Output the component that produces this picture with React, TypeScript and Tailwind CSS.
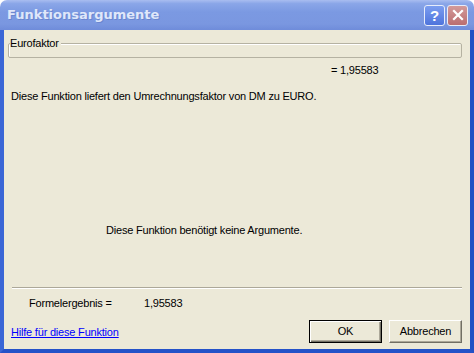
import React from "react";

const font = { fontFamily: '"Liberation Sans", Arial, sans-serif', letterSpacing: "-0.2px" };

function Btn({ children, def }: { children: React.ReactNode; def?: boolean }) {
  return (
    <div
      className={
        "w-[73px] h-[23px] flex items-center justify-center text-[11px] text-black bg-[#ece9d8] " +
        (def
          ? "border border-black shadow-[inset_1px_1px_0_#ffffff,inset_-1px_-1px_0_#716f64,inset_-2px_-2px_0_#aca899]"
          : "border-t border-l border-t-white border-l-white border-r border-b border-r-[#716f64] border-b-[#716f64] shadow-[inset_-1px_-1px_0_#aca899]")
      }
    >
      {children}
    </div>
  );
}

export default function App() {
  return (
    <div className="w-[474px] h-[353px] flex flex-col bg-white" style={font}>
      {/* title bar */}
      <div className="h-[30px] shrink-0 rounded-t-[7px] flex items-center pl-[7px] pr-[6px] bg-[linear-gradient(180deg,#a9bdf0_0%,#8aa6e8_12%,#7b99e2_40%,#7a97e0_80%,#6f8cda_100%)]">
        <span
          className="text-[13px] font-bold text-[#dfe7fa] tracking-[0px]"
          style={{ fontFamily: '"DejaVu Sans", "Liberation Sans", sans-serif', textShadow: "1px 1px 0 #6a86cf" }}
        >
          Funktionsargumente
        </span>
        <div className="ml-auto flex gap-[2px] items-center">
          <div className="w-[21px] h-[21px] rounded-[3px] border border-[#e6ecfb] bg-[linear-gradient(180deg,#7b9df0,#4e74dc)] flex items-center justify-center text-white text-[15px] font-bold leading-none">
            ?
          </div>
          <div className="w-[21px] h-[21px] rounded-[3px] border border-[#e6ecfb] bg-[linear-gradient(180deg,#d39a9a,#bb6e70)] flex items-center justify-center">
            <svg width="12" height="12" viewBox="0 0 12 12">
              <path d="M2 2L10 10M10 2L2 10" stroke="#fff" strokeWidth="2.2" strokeLinecap="square" />
            </svg>
          </div>
        </div>
      </div>
      {/* body with frame */}
      <div className="flex-1 flex flex-col bg-[#ece9d8] border-l-[4px] border-l-[#3a66d6] border-r-[4px] border-r-[#2150c4] border-b-[4px] border-b-[#2452c8] text-[11px] text-black">
        {/* group box */}
        <div className="mt-[13px] ml-[4px] mr-[8px] h-[15px] relative border border-[#b5b2a2] rounded-[2px] shadow-[inset_1px_1px_0_#ffffff]">
          <span className="absolute left-[1px] top-[-8px] bg-[#ece9d8] pr-[2px] leading-[14px]">Eurofaktor</span>
        </div>
        <div className="mt-[6px] pl-[327px] leading-[13px]">= 1,95583</div>
        <div className="mt-[13px] pl-[7px] leading-[13px]">Diese Funktion liefert den Umrechnungsfaktor von DM zu EURO.</div>
        <div className="mt-[121px] pl-[102px] leading-[13px]">Diese Funktion benötigt keine Argumente.</div>
        <div className="mt-[50px] ml-[8px] mr-[8px] h-[2px] border-t border-t-[#aca899] border-b border-b-white" />
        <div className="mt-[8px] flex leading-[13px]">
          <span className="pl-[25px] w-[140px]">Formelergebnis =</span>
          <span>1,95583</span>
        </div>
        <div className="mt-[10px] flex items-center pl-[7px] pr-[8px]">
          <a className="text-[#0000ff] underline mt-[2px]">Hilfe für diese Funktion</a>
          <div className="ml-auto flex gap-[7px]">
            <Btn def>OK</Btn>
            <Btn>Abbrechen</Btn>
          </div>
        </div>
      </div>
    </div>
  );
}
